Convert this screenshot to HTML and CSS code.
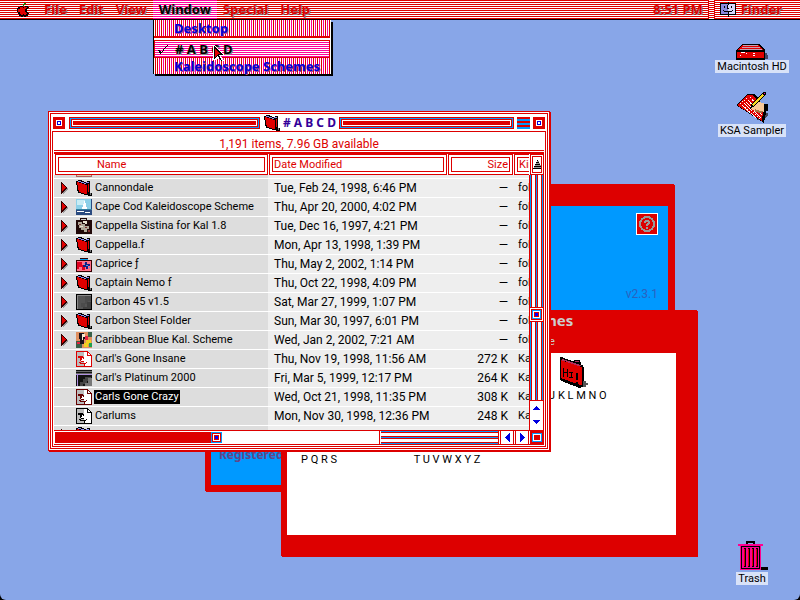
FILE: index.html
```html
<!DOCTYPE html>
<html lang="en">
<head>
<meta charset="utf-8">
<title>Finder</title>
<link rel="stylesheet" href="styles.css">
</head>
<body>
<svg class="defs" aria-hidden="true">
  <symbol id="folder" viewBox="0 0 16 16">
    <path d="M0 1h2V0h4v1h2v1h3V1h3v12h2v3h-4v-1H8v-1H5v-1H2v-2H1V5H0z" fill="#000"/>
    <path d="M1 2h2v1h3v1h3v1h2v9H8v-1H5v-1H3v-2H2V5H1z" fill="#e00000"/>
    <path d="M12 4h1v8h-1z" fill="#e00000"/>
    <path d="M2 1h3v1H2zM5 2h3v1H5zM10 2h3v1h-3zM8 3h2v1H8z" fill="#9090f0"/>
    <path d="M14 13h1v2h-1z" fill="#777"/>
  </symbol>
  <symbol id="face" viewBox="0 0 16 16">
    <path d="M0 1h10l5 5v9H0z" fill="#fff"/>
    <path class="face-shade" d="M1 1h7v5H5v4h3v5H1z"/>
    <path d="M0 0h11v1H1v14h14V5h1v11H0zM11 0h1v1h1v1h1v1h1v1h1v1h-5zM2 5h5v1h1v1H6v2H5v1h3v1H5v-1H4V7H2zM3 11h2v1h5v-1h1v1h-1v1H4v-1H3zM7 6h1v2H7zM8 12h1v3H8z" fill="currentColor"/>
    <path d="M12 2h1v1h1v1h-2z" fill="#fff"/>
  </symbol>
  <symbol id="tri" viewBox="0 0 8 12">
    <path d="M2 2l5 5-5 5z" fill="#999"/>
    <path d="M0 0h1v1h1v1h1v1h1v1h1v1h1v2H5v1H4v1H3v1H2v1H1v1H0z" fill="#300"/>
    <path d="M1 2h1v1h1v1h1v1h1v1H4v1H3v1H2v1H1z" fill="#e00000"/>
  </symbol>
  <symbol id="bigfolder" viewBox="0 0 32 32">
    <path d="M24 24h3v2h2v2h-2v2h-7v-4z" fill="#555"/>
    <path d="M1 0h3v1h2v1h3v1h3v1h3V3h6v2h1v3h2v2h1v14h-1v6h-2v1h-3v-1h-2v-1h-3v-1h-3v-1H9v-1H6v-1H4v-1H2v-1H1z" fill="#000"/>
    <path d="M2 3h2v1h2v1h3v1h3v1h3v1h3v1h3v1h2v18h-3v-1h-3v-1h-3v-1h-3v-1H9v-1H6v-1H3v-1H2z" fill="#e00000"/>
    <path d="M3 2h2v1h3v1h3v1h3v1h3v1h3v1h2v1h-4V8h-3V7h-3V6h-3V5H7V4H3zM16 4h4v1h-4z" fill="#b03060"/>
    <path d="M4 11h1v4h3v-3h1v8H8v-4H5v4H4zM10 15h4v1h-1v4h1v1h-4v-1h2v-4h-2zM17 16h2v7h-2zM17 25h2v2h-2z" fill="#000"/>
  </symbol>
</svg>

<nav class="menubar" aria-label="Menu bar">
  <button class="menu apple" aria-label="Apple menu">
    <svg viewBox="0 0 13 15" width="13" height="15"><path d="M3 4h2l2 1 2-1h2v1h1v1h-1v1h-1v3h1v1h1v1h-1v2H9v1H7v-1H6v1H4v-1H2v-2H1v-2H0V6h1V5h2z" fill="#000"/><path d="M3 5h3v1h1V5h3v1H9v1H8v3h1v1h1v1H9v1H7v-1H6v1H4v-1H3v-2H1V7h2z" fill="#e00000"/><path d="M6 2h1V1h2v1H8v1H7v1H6z" fill="#080"/></svg>
  </button>
  <button class="menu">File</button>
  <button class="menu">Edit</button>
  <button class="menu">View</button>
  <button class="menu active">Window</button>
  <button class="menu">Special</button>
  <button class="menu">Help</button>
  <span class="clock">8:51 PM</span>
  <span class="grip"></span>
  <button class="menu app">
    <svg viewBox="0 0 16 15" width="16" height="15"><path d="M0 1h16v12H0z" fill="#000"/><path d="M1 2h7v10H1z" fill="#8a8ae0"/><path d="M8 2h7v10H8z" fill="#d8d8ff"/><path d="M4 4h1v2H4zM11 4h1v2h-1zM8 0h1v3H8v4H7V3h1zM7 6h2v1H7zM3 8h1v1h8V8h1v1h-1v1H4V9H3zM8 10h1v5H8z" fill="#000"/></svg>Finder
  </button>
  <div class="dropdown">
    <button class="item">Desktop</button>
    <hr>
    <button class="item chosen"><svg class="check" viewBox="0 0 10 10" width="10" height="10"><path d="M9 0h1v1H9v1H8v1H7v1H6v2H5v1H4v1H3v1H2V8H1V6H0V5h2v1h1v1h1V6h1V4h1V3h1V2h1V1h1z" fill="#000"/></svg># A B C D</button>
    <button class="item">Kaleidoscope Schemes</button>
    <svg class="pointer" viewBox="0 0 12 17" width="12" height="17"><path d="M0 0h1l10 10v1H8l3 5-2 1-3-5-3 3H0z" fill="#fff"/><path d="M1 1l9 9H6l3 6H8l-3-5-4 3z" fill="#000"/><path d="M2 4l5 5H5l-3 3z" fill="#e00000"/></svg>
  </div>
</nav>

<main class="desktop">
  <section class="window about">
    <div class="about-body">
      <button class="help" aria-label="Help"><svg viewBox="0 0 18 18" width="18" height="18"><circle cx="9" cy="9" r="7" fill="none" stroke="#999" stroke-width="2"/><path d="M6 8V6h1V5h4v1h1v3h-1v1h-1v1H8V9h1V8h1V7H8v1zM8 12h2v2H8z" fill="#999"/></svg></button>
      <span class="version">v2.3.1</span>
      <span class="registered">Registered</span>
    </div>
  </section>

  <section class="window schemes">
    <h2>Kaleidoscope Schemes</h2>
    <p>38 items, 7.96 GB available</p>
    <ul class="icons">
      <li><svg><use href="#bigfolder"/></svg>I J K L M N O</li>
      <li><svg><use href="#bigfolder"/></svg>P Q R S</li>
      <li><svg><use href="#bigfolder"/></svg>T U V W X Y Z</li>
    </ul>
  </section>

  <section class="window front">
    <div class="inset">
      <header class="titlebar">
        <button class="box" aria-label="Close"></button>
        <span class="race left"></span>
        <h1><svg width="16" height="16"><use href="#folder"/></svg># A B C D</h1>
        <span class="race right"></span>
        <button class="shade" aria-label="Collapse"></button>
        <button class="box" aria-label="Zoom"></button>
      </header>
      <div class="frame">
        <p class="status">1,191 items, 7.96 GB available</p>
        <div class="list">
          <table>
            <thead><tr><th>Name</th><th>Date Modified</th><th>Size</th><th>Kind</th></tr></thead>
            <tbody>
              <tr><td><svg class="ic"><path d="M0 0h16v16H0z" fill="#a66"/><path d="M1 1h14v14H1z" fill="#dca"/></svg></td><td></td><td></td><td></td></tr>
              <tr><td><svg class="tri"><use href="#tri"/></svg><svg class="ic"><use href="#folder"/></svg><span>Cannondale</span></td><td>Tue, Feb 24, 1998, 6:46 PM</td><td>—</td><td>folder</td></tr>
              <tr><td><svg class="tri"><use href="#tri"/></svg><svg class="ic"><path d="M0 0h16v16H0z" fill="#2a4a80"/><path d="M0 0h15v10H0z" fill="#8cd0e8"/><path d="M1 1h8v5H1z" fill="#c8ecf4"/><path d="M8 2h1v2h1v4h1v2H6V8h1V5h1zM1 12h7v1H1zM9 13h5v1H9z" fill="#fff"/><path d="M0 10h16v1H0z" fill="#3080a0"/></svg><span>Cape Cod Kaleidoscope Scheme</span></td><td>Thu, Apr 20, 2000, 4:02 PM</td><td>—</td><td>folder</td></tr>
              <tr><td><svg class="tri"><use href="#tri"/></svg><svg class="ic"><path d="M0 2h4V0h7v2h5v14H0z" fill="#200808"/><path d="M5 1h5v1H5z" fill="#ccc"/><path d="M2 4h4v2h3v2h4v3h-2v3H8v-2H5v-2H3z" fill="#b0a898"/><path d="M7 3h4v3H9V5H7zM4 8h3v1H4z" fill="#e8e0d0"/><path d="M3 6h2v1H3zM9 9h2v1H9zM12 12h2v2h-2z" fill="#803030"/></svg><span>Cappella Sistina for Kal 1.8</span></td><td>Tue, Dec 16, 1997, 4:21 PM</td><td>—</td><td>folder</td></tr>
              <tr><td><svg class="tri"><use href="#tri"/></svg><svg class="ic"><use href="#folder"/></svg><span>Cappella.f</span></td><td>Mon, Apr 13, 1998, 1:39 PM</td><td>—</td><td>folder</td></tr>
              <tr><td><svg class="tri"><use href="#tri"/></svg><svg class="ic"><path d="M0 4h4V2h8v2h4v12H0z" fill="#300"/><path d="M1 5h14v10H1z" fill="#ff7088"/><path d="M1 6h5v3h3v5H6v-3H3v2H1z" fill="#e00020"/><path d="M4 3h8v1H4z" fill="#00a0f0"/><path d="M9 6h2v2h3v2h-2v3h-2v-2H7V9h2z" fill="#102080"/><path d="M10 9h2v1h-2zM8 7h1v1H8zM13 11h1v1h-1z" fill="#40a0ff"/></svg><span>Caprice ƒ</span></td><td>Thu, May 2, 2002, 1:14 PM</td><td>—</td><td>folder</td></tr>
              <tr><td><svg class="tri"><use href="#tri"/></svg><svg class="ic"><use href="#folder"/></svg><span>Captain Nemo f</span></td><td>Thu, Oct 22, 1998, 4:09 PM</td><td>—</td><td>folder</td></tr>
              <tr><td><svg class="tri"><use href="#tri"/></svg><svg class="ic carbon"><path d="M0 0h16v16H0z" fill="#000"/><path d="M1 1h14v14H1z" fill="#555"/><path d="M1 1h14v1H2v13H1z" fill="#888"/><path d="M9 2h6v5h-3v3H9v3H5V9h4z" fill="#4c4c4c"/><path d="M11 8h4v7H7v-2h4z" fill="#404040"/></svg><span>Carbon 45 v1.5</span></td><td>Sat, Mar 27, 1999, 1:07 PM</td><td>—</td><td>folder</td></tr>
              <tr><td><svg class="tri"><use href="#tri"/></svg><svg class="ic"><use href="#folder"/></svg><span>Carbon Steel Folder</span></td><td>Sun, Mar 30, 1997, 6:01 PM</td><td>—</td><td>folder</td></tr>
              <tr><td><svg class="tri"><use href="#tri"/></svg><svg class="ic"><path d="M0 0h16v16H0z" fill="#e09060"/><path d="M0 9h6v7H0zM12 0h4v5h-4z" fill="#386048"/><path d="M3 1h5v3h2v3H8v5H4V7H3z" fill="#181018"/><path d="M6 2h3v3H7v3H6z" fill="#f8e8d0"/><path d="M9 4h3v4H9zM1 10h3v2H1z" fill="#e82040"/><path d="M10 8h5v4h-3v3H8v-4h2z" fill="#f0d020"/><path d="M13 11h3v4h-3z" fill="#20a050"/></svg><span>Caribbean Blue Kal. Scheme</span></td><td>Wed, Jan 2, 2002, 7:21 AM</td><td>—</td><td>folder</td></tr>
              <tr><td><i class="tri"></i><svg class="ic face red"><use href="#face"/></svg><span>Carl's Gone Insane</span></td><td>Thu, Nov 19, 1998, 11:56 AM</td><td>272 K</td><td>Kaleido</td></tr>
              <tr><td><i class="tri"></i><svg class="ic"><path d="M0 0h16v16H0z" fill="#111"/><path d="M0 1h16v1H0zM0 3h16v1H0z" fill="#666"/><path d="M0 4h16v1H2v11H1V5H0z" fill="#b090e0"/><path d="M9 7h6v4h-4v3H7v2H4v-4h3V9h2z" fill="#444"/><path d="M12 8h4v8H9v-3h3z" fill="#777"/></svg><span>Carl's Platinum 2000</span></td><td>Fri, Mar 5, 1999, 12:17 PM</td><td>264 K</td><td>Kaleido</td></tr>
              <tr><td><i class="tri"></i><svg class="ic face dark"><use href="#face"/></svg><span class="selected">Carls Gone Crazy</span></td><td>Wed, Oct 21, 1998, 11:35 PM</td><td>308 K</td><td>Kaleido</td></tr>
              <tr><td><i class="tri"></i><svg class="ic face"><use href="#face"/></svg><span>Carlums</span></td><td>Mon, Nov 30, 1998, 12:36 PM</td><td>248 K</td><td>Kaleido</td></tr>
              <tr><td><svg class="tri"><use href="#tri"/></svg><svg class="ic"><use href="#folder"/></svg></td><td></td><td></td><td></td></tr>
            </tbody>
          </table>
          <div class="side">
            <button class="sort" aria-label="Sort order"><svg viewBox="0 0 9 9" width="9" height="9"><path d="M4 0h1v1H4zM3 2h3v1H3zM2 4h5v1H2zM1 6h7v1H1zM0 8h9v1H0z" fill="#000"/><path d="M4 1h2v1H4zM3 3h4v1H3zM2 5h6v1H2zM1 7h8v1H1z" fill="#999"/></svg></button>
            <div class="vtrack"><i class="thumb"></i></div>
            <div class="varrows">
              <button aria-label="Scroll up"><svg viewBox="0 0 9 5" width="9" height="5"><path d="M4 0h1v1h1v1h1v1h1v1H1V3h1V2h1V1h1z" fill="#0000e0"/></svg></button>
              <button aria-label="Scroll down"><svg viewBox="0 0 9 5" width="9" height="5"><path d="M1 0h7v1H7v1H6v1H5v1H4V3H3V2H2V1H1z" fill="#0000e0"/></svg></button>
            </div>
          </div>
        </div>
        <div class="hscroll">
          <div class="done"><i class="mark"></i></div>
          <div class="rest"></div>
          <div class="htrack"></div>
          <button class="arrow" aria-label="Scroll left"><svg viewBox="0 0 5 9" width="5" height="9"><path d="M4 0h1v9H4V8H3V7H2V6H1V5H0V4h1V3h1V2h1V1h1z" fill="#0000e0"/></svg></button>
          <button class="arrow" aria-label="Scroll right"><svg viewBox="0 0 5 9" width="5" height="9"><path d="M0 0h1v1h1v1h1v1h1v1h1v1H4v1H3v1H2v1H1v1H0z" fill="#0000e0"/></svg></button>
          <button class="resize" aria-label="Resize"></button>
        </div>
      </div>
    </div>
  </section>

  <div class="volumes">
    <button class="volume">
      <svg viewBox="0 0 32 16" width="32" height="16"><path d="M28 9h3v2h1v4h-4z" fill="#446"/><path d="M6 0h18v1h1v1h1v1h1v1h1v1h1v11H0V6h1V5h1V4h1V3h1V2h1V1h1z" fill="#000"/><path d="M6 1h17v1h1v1h1v1h1v1h1v1H2V5h1V4h1V3h1V2h1zM1 8h27v6H1z" fill="#e00000"/><path d="M7 1h15v1H7zM6 3h18v1H6zM4 5h22v1H4z" fill="#c8a0b0"/><path d="M5 8h4v1H5zM10 9h1v1h-1zM17 9h2v1h-2zM17 11h2v1h-2zM4 11h1v1H4z" fill="#fff"/></svg>
      <span>Macintosh HD</span>
    </button>
    <button class="volume sampler">
      <svg viewBox="0 0 32 32" width="32" height="32"><path d="M22 24l10-3v2l-5 5h-6z" fill="#445"/><path d="M12 2h6l4 4 8 14-2 11L0 13z" fill="#000"/><path d="M12 3h5l4 5 6 12-1 9L1 13z" fill="#e00000"/><path d="M10 6l16 17M8 8l17 18M6 9l19 19M4 11l16 15M14 5l5 6" stroke="#fff" stroke-width="1" stroke-dasharray="2 1" fill="none"/><path d="M15 17l4-7 5 0 5 2v7l-6 2-6-3z" fill="#f8c898"/><path d="M19 17l5 2h4l-3 2-6-1z" fill="#a87040"/><path d="M28 12h4v7h-4z" fill="#000"/><path d="M27 0h3v3L17 15l-3 2 1-4z" fill="#000"/><path d="M26 2l2 2-11 10-1-2z" fill="#f8d820"/><path d="M28 1h1v1h-1z" fill="#f0a"/></svg>
      <span>KSA Sampler</span>
    </button>
    <button class="volume trash">
      <svg viewBox="0 2 32 32" width="32" height="32"><path d="M10 3h9v3h-2V5h-5v1h-2zM25 29h7v3h-7z" fill="#000"/><path d="M2 6h25v2h-2v24H4V8H2z" fill="#ff0090"/><path d="M5 8h19v23H5z" fill="#000"/><path d="M6 9h17v21H6z" fill="#ff0090"/><path d="M8 10h2v19H8zM12 10h2v19h-2zM16 10h2v19h-2zM20 10h2v19h-2z" fill="#000"/><path d="M8 11h1v17H8zM12 11h1v17h-1zM16 11h1v17h-1zM20 11h1v17h-1z" fill="#e00000"/></svg>
      <span>Trash</span>
    </button>
  </div>
</main>
</body>
</html>
```
FILE: styles.css
```css
:root {
  --red: #dd0000;
  --blue: #0099ff;
  --pink: #ff0099;
  --sky: #88a6e8;
  --list-font: Roboto, "Liberation Sans", sans-serif;
  --title-font: "Noto Sans", "Open Sans", sans-serif;
}

* { box-sizing: border-box; margin: 0; padding: 0; }

html { height: 100%; background: #000; }

body {
  display: flex;
  flex-direction: column;
  min-height: 100%;
  overflow: hidden;
  background: var(--sky);
  border-radius: 0 0 6px 6px;
  font: 11px/12px var(--list-font);
  color: #000;
}

button { border: 0; background: none; font: inherit; color: inherit; }
svg { display: block; flex: none; shape-rendering: crispEdges; }
.defs { position: absolute; width: 0; height: 0; }

/* Menu bar */
.menubar {
  position: relative;
  z-index: 2;
  display: flex;
  height: 20px;
  padding: 0 11px;
  border-bottom: 1px solid #000;
  background: linear-gradient(var(--red) 50%, #fff 50%) 0 0 / 100% 2px;
  font: bold 13px/19px var(--title-font);
}
.menu {
  display: flex;
  align-items: center;
  padding: 0 6px;
  color: var(--red);
  text-shadow: 1px 1px #888;
}
.apple { padding-right: 8px; }
.menu.active {
  color: #000;
  background: linear-gradient(var(--pink) 50%, #fff 50%) 0 0 / 100% 2px;
}
.clock { margin-left: auto; color: var(--red); text-shadow: 1px 1px #888; }
.grip {
  width: 7px;
  margin: 0 5px;
  border: solid var(--red);
  border-width: 0 1px;
  background: linear-gradient(#fff 50%, var(--red) 50%) 0 0 / 100% 2px;
}
.app { gap: 5px; padding: 0 7px 0 0; }

.dropdown {
  position: absolute;
  top: 20px;
  left: 153px;
  width: 178px;
  border-left: 1px solid #000;
  border-right: 1px solid #fff;
  box-shadow: 2px 2px #000;
  background:
    linear-gradient(var(--red), var(--red)) 1px 0 / 8px 100% no-repeat,
    linear-gradient(90deg, transparent 75%, var(--red) 75%) 0 0 / 4px 100%,
    linear-gradient(90deg, #fff 50%, var(--pink) 50%) 0 0 / 2px 100%;
  background-size: 1px 100%, 4px 100%, 2px 100%;
}
.item {
  display: block;
  width: 100%;
  padding: 0 9px 0 20px;
  font: bold 13px/16px var(--title-font);
  text-align: left;
  white-space: nowrap;
  color: #0000d8;
  text-shadow: 1px 1px #b04090;
}
.dropdown hr {
  height: 5px;
  border: solid var(--red);
  border-width: 2px 0 1px;
  background: #fff;
}
.chosen {
  position: relative;
  border: solid var(--red);
  border-width: 0 1px 1px;
  color: #000;
  text-shadow: 1px 1px #888;
  background: linear-gradient(#fff 50%, var(--pink) 50%) 0 0 / 100% 2px;
}
.check { position: absolute; left: 3px; top: 4px; }
.pointer { position: absolute; left: 59px; top: 25px; }

/* Windows */
.desktop { position: relative; flex: 1; }
.window { position: absolute; }

.about {
  left: 205px;
  top: 164px;
  width: 469px;
  padding: 22px 6px 6px;
  background: var(--red);
  box-shadow: 1px 1px var(--red);
}
.about-body {
  display: grid;
  grid-template-rows: 75px 1fr auto;
  height: 279px;
  padding: 7px 10px 23px 8px;
  background: var(--blue);
  font-size: 12px;
}
.help {
  justify-self: end;
  align-self: start;
  padding: 1px;
  border: 1px solid #fff;
  background: var(--red);
}
.version { justify-self: end; color: #2a62c0; }
.registered { font: bold 12px/14px var(--title-font); color: #664488; }

.schemes {
  left: 281px;
  top: 290px;
  width: 416px;
  padding: 0 21px 21px 6px;
  background: var(--red);
  box-shadow: 1px 1px var(--red);
  color: #ccc;
}
.schemes h2, .schemes p { margin-right: -15px; text-align: center; }
.schemes h2 { font: bold 15px/21px var(--title-font); }
.schemes p { padding: 5px 0; }
.icons {
  display: grid;
  grid-template-columns: repeat(3, 64px);
  grid-auto-rows: 64px;
  column-gap: 64px;
  height: 182px;
  padding-top: 4px;
  background: #fff;
  color: #000;
  list-style: none;
}
.icons li {
  display: flex;
  flex-direction: column;
  align-items: center;
  gap: 1px;
  white-space: nowrap;
}
.icons li:first-child { grid-column: 3; }
.icons svg { width: 32px; height: 32px; }

.front {
  left: 48px;
  top: 91px;
  width: 502px;
  padding: 1px;
  border: 1px solid var(--red);
  background: #fff;
  box-shadow: 1px 1px var(--red);
}
.inset { padding: 0 1px 1px; border: 1px solid var(--red); }
.front h1 {
  display: flex;
  align-items: center;
  gap: 3px;
  margin: 0 0 0 1px;
  font: bold 12px/17px var(--title-font);
  color: #330099;
}
.titlebar {
  display: flex;
  align-items: center;
  gap: 3px;
  height: 17px;
  padding: 0 1px;
}
.box, .race, .shade { height: 12px; }
.box {
  width: 12px;
  border: 3px solid var(--red);
  background: #fff;
  box-shadow: inset 0 0 0 1px #fff, inset 0 0 0 2px #0000dd;
}
.race {
  border: 1px solid var(--red);
  background: var(--red);
  box-shadow: inset 0 0 0 1px var(--blue), inset 0 0 0 2px var(--red), inset 0 0 0 3px #fff;
}
.left { flex: 191; margin-left: 1px; }
.right { flex: 175; }
.shade {
  width: 13px;
  background: linear-gradient(var(--red) 2px, var(--blue) 2px) 0 0 / 100% 4px;
}
.frame { padding: 1px; border: 1px solid var(--red); }
.status {
  padding: 4px 0 1px;
  height: 18px;
  font-size: 12px;
  line-height: 14px;
  border-bottom: 1px solid var(--red);
  text-align: center;
  color: var(--red);
}

.list { display: flex; margin-top: 1px; border-top: 2px solid var(--red); }
table { display: block; flex: 1; min-width: 0; overflow: hidden; }
thead, tbody { display: block; }
tr { display: grid; grid-template-columns: 214px 179px 66px 1fr; }
thead tr { padding-left: 1px; }
th {
  height: 21px;
  margin-right: 1px;
  border: 1px solid var(--red);
  outline: 1px solid var(--red);
  outline-offset: -4px;
  padding: 0 4px;
  font-weight: normal;
  line-height: 19px;
  text-align: left;
  color: var(--red);
}
th:first-child { padding-left: 41px; }
th:nth-child(3) { text-align: right; }
th:last-child { margin-right: -16px; }
tbody { height: 255px; overflow: hidden; }
tbody tr { height: 19px; border-bottom: 1px solid #fff; background: #eee; }
tbody tr:first-child { margin-top: -15px; }
td { line-height: 18px; white-space: nowrap; overflow: hidden; padding-left: 5px; }
td:first-child {
  display: flex;
  align-items: center;
  gap: 3px;
  padding-left: 7px;
  background: #ddd;
}
td:nth-child(2) { padding-left: 6px; font-size: 12px; }
td:nth-child(3) { text-align: right; padding-right: 5px; font-size: 12px; }
td:first-child span { line-height: 14px; }
.tri { width: 8px; height: 12px; margin-right: 4px; }
.ic { width: 16px; height: 16px; color: #000; }
tbody tr:first-child .ic { margin-left: 15px; }
.face-shade { fill: #bbb; }
.red { color: var(--red); }
.dark { color: #600; }
td .selected { margin-left: -1px; padding: 0 1px; background: #000; color: #fff; }

.side { display: flex; flex-direction: column; width: 15px; }
.sort {
  display: grid;
  place-items: center;
  width: 14px;
  height: 21px;
  margin-left: 1px;
  border: 1px solid var(--red);
  outline: 1px solid var(--red);
  outline-offset: -3px;
}
.vtrack {
  flex: 1;
  background:
    linear-gradient(var(--blue), var(--blue)) 1px 0 / 1px 100% no-repeat,
    linear-gradient(var(--blue), var(--blue)) 7px 0 / 1px 100% no-repeat,
    linear-gradient(var(--blue), var(--blue)) 13px 0 / 1px 100% no-repeat,
    linear-gradient(90deg, var(--red) 50%, #fff 50%) 0 0 / 6px 100%;
}
.thumb, .resize {
  display: block;
  width: 15px;
  height: 15px;
  border: 1px solid var(--red);
  background: #00f;
  box-shadow: inset 0 0 0 1px #fff, inset 0 0 0 2px var(--red), inset 0 0 0 3px var(--blue), inset 0 0 0 4px #fff, inset 0 0 0 5px var(--red);
}
.thumb { margin-top: 132px; }
.varrows { height: 30px; border: 1px solid var(--red); border-bottom: 0; background: #fff; }
.varrows button { display: grid; place-items: center; width: 100%; height: 14px; }

.hscroll { display: flex; height: 15px; border: solid var(--red); border-width: 1px 0; background: #fff; }
.done {
  flex: 168;
  margin: 1px 0 1px 1px;
  background: var(--red);
}
.mark {
  display: block;
  width: 11px;
  height: 11px;
  margin-left: auto;
  border: 1px solid var(--blue);
  background: #00f;
  box-shadow: inset 0 0 0 1px var(--red), inset 0 0 0 2px #fff, inset 0 0 0 3px var(--red);
}
.rest { flex: 158; border-right: 1px solid var(--red); }
.htrack {
  flex: 118;
  margin: 0 1px;
  border-right: 1px solid var(--red);
  background:
    linear-gradient(var(--blue), var(--blue)) 0 0 / 100% 1px no-repeat,
    linear-gradient(var(--blue), var(--blue)) 0 6px / 100% 1px no-repeat,
    linear-gradient(var(--blue), var(--blue)) 0 12px / 100% 1px no-repeat,
    linear-gradient(var(--red) 50%, #fff 50%) 0 -1px / 100% 6px;
}
.arrow {
  display: grid;
  place-items: center;
  width: 14px;
  margin-right: 1px;
  border: solid var(--red);
  border-width: 0 1px;
}
.resize {
  height: 13px;
  width: 14px;
  border-width: 2px;
  background: var(--red);
  box-shadow: inset 0 0 0 1px var(--blue), inset 0 0 0 2px #fff, inset 0 0 0 3px var(--red);
}

/* Desktop icons */
.volumes {
  position: absolute;
  top: 24px;
  right: 13px;
  bottom: 15px;
  display: flex;
  flex-direction: column;
  align-items: center;
  width: 70px;
}
.volume { display: flex; flex-direction: column; align-items: center; }
.volume span {
  padding: 0 2px;
  line-height: 13px;
  white-space: nowrap;
  background: #d8e2f8;
}
.sampler { margin-top: 19px; }
.trash { margin-top: auto; }
```
